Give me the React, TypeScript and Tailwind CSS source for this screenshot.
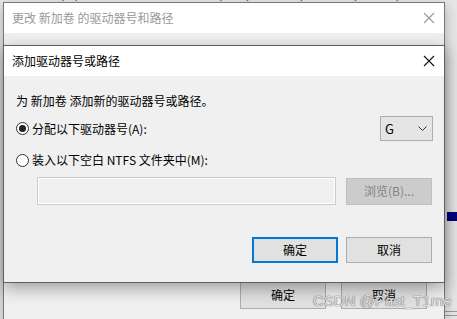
const font = { fontFamily: '"Noto Sans CJK SC", "Microsoft YaHei", sans-serif' };

const CloseIcon = ({ color }: { color: string }) => (
  <svg width="12" height="12" viewBox="0 0 12 12" className="shrink-0">
    <path d="M1 1 L11 11 M11 1 L1 11" stroke={color} strokeWidth="1.1" fill="none" />
  </svg>
);

const Radio = ({ checked }: { checked?: boolean }) => (
  <span className="flex h-[13px] w-[13px] shrink-0 items-center justify-center rounded-full border border-[#333] bg-white">
    {checked && <span className="h-[7px] w-[7px] rounded-full bg-[#222]" />}
  </span>
);

const WinButton = ({
  label,
  primary,
  disabled,
}: {
  label: string;
  primary?: boolean;
  disabled?: boolean;
}) => (
  <div
    className={
      primary
        ? "flex h-[26px] w-[86px] items-center justify-center border-2 border-[#0078d7] bg-[#e1e1e1] text-[12px] text-black"
        : disabled
          ? "flex h-[27px] w-[86px] items-center justify-center border border-[#bfbfbf] bg-[#cccccc] text-[12px] text-[#838383]"
          : "flex h-[26px] w-[86px] items-center justify-center border border-[#adadad] bg-[#e1e1e1] text-[12px] text-black"
    }
  >
    {label}
  </div>
);

export default function App() {
  return (
    <div
      className="relative h-[319px] w-[457px] overflow-hidden bg-[#e6e6e6]"
      style={font}
    >
      {/* background app fragments */}
      <div className="absolute left-[60px] top-[-15px] whitespace-nowrap text-[12px] text-[#222]">
        (C:) 简单 基本 NTFS 状态良好 (启动, 页面文件, 故障转储, 主分区)
      </div>
      <div className="absolute left-[-4px] top-[8px] text-[12px] leading-[16px] text-[#222]">)</div>
      <div className="absolute left-[-4px] top-[26px] text-[12px] leading-[16px] text-[#222]">)</div>
      <div className="absolute right-0 top-[212px] h-[9px] w-[10px] bg-[#00007f]" />
      <div className="absolute right-0 top-[311px] h-px w-[12px] bg-[#999]" />
      <div className="absolute right-0 top-[315px] h-px w-[12px] bg-[#999]" />

      {/* back window */}
      <div className="absolute left-[3px] top-[2px] flex h-[319px] w-[442px] flex-col border-l border-t border-r border-[#777] bg-[#f0f0f0] shadow-[0_4px_12px_rgba(0,0,0,0.25)]">
        <div className="flex h-[30px] shrink-0 items-center justify-between bg-white pl-[8px] pr-[9px]">
          <span className="text-[12px] text-[#999]">更改 新加卷 的驱动器号和路径</span>
          <CloseIcon color="#999" />
        </div>
        <div className="flex-1" />
        <div className="flex justify-end gap-[15px] pb-[12px] pr-[17px]">
          <div className="flex h-[28px] w-[86px] items-center justify-center border border-[#adadad] bg-[#e1e1e1] text-[12px] text-black">
            确定
          </div>
          <div className="flex h-[28px] w-[86px] items-center justify-center border border-[#adadad] bg-[#e1e1e1] text-[12px] text-black">
            取消
          </div>
        </div>
      </div>

      {/* front dialog */}
      <div className="absolute left-[3px] top-[45px] flex h-[238px] w-[442px] flex-col border border-[#5f5f5f] bg-[#f0f0f0] shadow-[0_5px_16px_rgba(0,0,0,0.35)]">
        <div className="flex h-[30px] shrink-0 items-center justify-between bg-white pl-[8px] pr-[9px]">
          <span className="text-[12px] text-black">添加驱动器号或路径</span>
          <CloseIcon color="#111" />
        </div>
        <div className="flex flex-col pl-[12px] pr-[11px] text-[12px] leading-[16px] text-black">
          <div className="mt-[17px]">为 新加卷 添加新的驱动器号或路径。</div>
          <div className="mt-[7px] flex h-[25px] items-center justify-between">
            <div className="flex items-center gap-[3px]">
              <Radio checked />
              <span>分配以下驱动器号(A):</span>
            </div>
            <div className="flex h-[25px] w-[53px] items-center justify-between border border-[#adadad] bg-[#e5e5e5] pl-[4px] pr-[5px]">
              <span className="text-[13px]">G</span>
              <svg width="9" height="5" viewBox="0 0 9 5">
                <path d="M0.5 0.5 L4.5 4.5 L8.5 0.5" stroke="#333" strokeWidth="1" fill="none" />
              </svg>
            </div>
          </div>
          <div className="mt-[11px] flex items-center gap-[3px]">
            <Radio />
            <span>装入以下空白 NTFS 文件夹中(M):</span>
          </div>
          <div className="mt-[9px] flex items-center justify-between pl-[21px] pr-[1px]">
            <div className="h-[28px] w-[299px] border border-[#cccccc] bg-[#f0f0f0] shadow-[inset_0_0_0_1px_#ffffff]" />
            <WinButton label="浏览(B)..." disabled />
          </div>
          <div className="mt-[32px] flex justify-end gap-[8px] pr-[1px]">
            <WinButton label="确定" primary />
            <WinButton label="取消" />
          </div>
        </div>
      </div>

      {/* watermark */}
      <div
        className="absolute left-[313px] top-[290px] whitespace-nowrap text-[15px] text-[#ffffffd0] [text-shadow:0_0_1px_#555,0_0_1px_#777]"
        style={{ fontFamily: '"Liberation Sans", Arial, sans-serif' }}
      >
        CSDN @Past_T1me
      </div>
    </div>
  );
}
